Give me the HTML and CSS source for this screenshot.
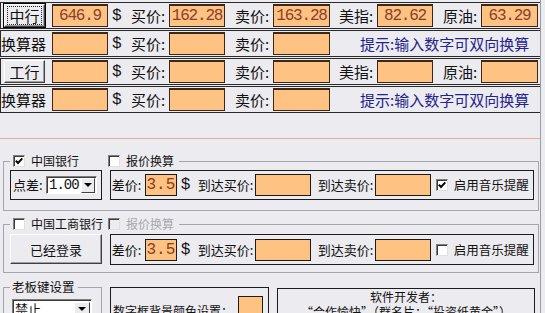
FILE: index.html
```html
<!DOCTYPE html>
<html lang="zh-CN">
<head>
  <meta charset="UTF-8">
  <title>纸黄金报价</title>
  <link rel="stylesheet" href="styles.css">
</head>
<body>
<div class="app">

  <div class="quotes">
    <div class="row row-bank">
      <button class="btn btn-bank btn-default"><span class="focus">中行</span></button>
      <input class="num" value="646.9">
      <span class="cur">$</span>
      <span class="lbl lbl-buy">买价:</span>
      <input class="num" value="162.28">
      <span class="lbl lbl-sell">卖价:</span>
      <input class="num w57" value="163.28">
      <span class="lbl lbl-usd">美指:</span>
      <input class="num" value="82.62">
      <span class="lbl lbl-oil">原油:</span>
      <input class="num w57" value="63.29">
    </div>
    <div class="row">
      <span class="conv">换算器</span>
      <input class="num">
      <span class="cur">$</span>
      <span class="lbl lbl-buy">买价:</span>
      <input class="num">
      <span class="lbl lbl-sell">卖价:</span>
      <input class="num w57">
      <span class="hint">提示:输入数字可双向换算</span>
    </div>
    <div class="row row-bank">
      <button class="btn btn-bank"><span class="focus none">工行</span></button>
      <input class="num">
      <span class="cur">$</span>
      <span class="lbl lbl-buy">买价:</span>
      <input class="num">
      <span class="lbl lbl-sell">卖价:</span>
      <input class="num w57">
      <span class="lbl lbl-usd">美指:</span>
      <input class="num">
      <span class="lbl lbl-oil">原油:</span>
      <input class="num w57">
    </div>
    <div class="row">
      <span class="conv">换算器</span>
      <input class="num">
      <span class="cur">$</span>
      <span class="lbl lbl-buy">买价:</span>
      <input class="num">
      <span class="lbl lbl-sell">卖价:</span>
      <input class="num w57">
      <span class="hint">提示:输入数字可双向换算</span>
    </div>
  </div>

  <div class="divider"></div>

  <!-- 中国银行 -->
  <fieldset class="group group-boc">
    <legend>
      <label class="opt opt-bank"><span class="check"><svg viewBox="0 0 10 10"><path d="M1.8 4.6 4 7 8.3 2.4"/></svg></span>中国银行</label>
      <label class="opt"><span class="check"></span>报价换算</label>
    </legend>
    <div class="group-body">
      <div class="box box-spread">
        <span class="lbl-s lbl-point">点差:</span>
        <div class="combo combo-spread"><span class="val">1.00</span><span class="drop"></span></div>
      </div>
      <div class="box box-alert">
        <span class="lbl-s lbl-diff">差价:</span>
        <input class="num-s w32" value="3.5">
        <span class="cur cur-s">$</span>
        <span class="lbl-s lbl-reach">到达买价:</span>
        <input class="num-s">
        <span class="lbl-s lbl-reach2">到达卖价:</span>
        <input class="num-s">
        <label class="opt opt-music"><span class="check"><svg viewBox="0 0 10 10"><path d="M1.8 4.6 4 7 8.3 2.4"/></svg></span>启用音乐提醒</label>
      </div>
    </div>
  </fieldset>

  <!-- 中国工商银行 -->
  <fieldset class="group group-icbc">
    <legend>
      <label class="opt opt-bank"><span class="check"></span>中国工商银行</label>
      <label class="opt disabled"><span class="check"></span>报价换算</label>
    </legend>
    <div class="group-body">
      <button class="btn btn-login">已经登录</button>
      <div class="box box-alert">
        <span class="lbl-s lbl-diff">差价:</span>
        <input class="num-s w32" value="3.5">
        <span class="cur cur-s">$</span>
        <span class="lbl-s lbl-reach">到达买价:</span>
        <input class="num-s">
        <span class="lbl-s lbl-reach2">到达卖价:</span>
        <input class="num-s">
        <label class="opt opt-music"><span class="check"></span>启用音乐提醒</label>
      </div>
    </div>
  </fieldset>

  <div class="bottom">
    <fieldset class="group group-boss">
      <legend>老板键设置</legend>
      <div class="combo combo-boss"><span class="val">禁止</span><span class="drop"></span></div>
    </fieldset>
    <div class="box box-color">
      <span>数字框背景颜色设置：</span>
      <span class="swatch"></span>
    </div>
    <div class="box box-dev">
      <div>软件开发者：</div>
      <div>“合作愉快”（群名片：“投资纸黄金”）</div>
    </div>
  </div>

</div>
</body>
</html>
```

FILE: styles.css
```css
* {
  box-sizing: border-box;
}

body {
  margin: 0;
  width: 545px;
  height: 313px;
  overflow: hidden;
  background: #ecebef;
  font-family: "Noto Sans CJK SC", "Noto Sans", sans-serif;
  color: #111;
}

.app {
  width: 541px;
  height: 313px;
  padding-top: 2px;
  border-right: 1px solid #9d9ca2;
}

/* top quote rows */

.row {
  display: flex;
  align-items: center;
  height: 27px;
  margin-bottom: 1px;
  border-top: 1px solid #2a2a2a;
  border-bottom: 1px solid #2a2a2a;
  border-left: 1px solid #2a2a2a;
  font-size: 15px;
  line-height: 18px;
  white-space: nowrap;
}

.row-bank {
  padding-left: 3px;
}

.btn {
  font-family: "Noto Sans CJK SC", sans-serif;
  background: #ecebef;
  color: #111;
  border: 1px solid;
  border-color: #fff #404040 #404040 #fff;
  box-shadow: inset -1px -1px 0 #a0a0a0;
  padding: 0;
  cursor: pointer;
}

.btn-bank {
  width: 41px;
  height: 23px;
  font-size: 15px;
  line-height: 17px;
}

.btn-default {
  outline: 1px solid #000;
  outline-offset: 0;
}

.focus {
  display: inline-block;
  padding: 0 1px;
  border: 1px dotted #222;
}

.focus.none {
  border-color: transparent;
}

.num {
  width: 56px;
  height: 23px;
  margin: 0;
  padding: 0;
  border: 1px solid #3a281c;
  border-top-width: 2px;
  background: #fec283;
  font-family: "Liberation Mono", monospace;
  font-size: 16px;
  letter-spacing: -1.2px;
  color: #8a3f2c;
  text-align: center;
}

.row-bank .num:first-of-type {
  margin-left: 7px;
}

.num.w57 {
  width: 57px;
}

.cur {
  width: 23px;
  padding-left: 4px;
  font-family: "Liberation Mono", monospace;
  font-size: 16px;
}

.lbl {
  flex: none;
}

.lbl-buy {
  width: 38px;
}

.lbl-sell {
  width: 48px;
  padding-left: 10px;
}

.lbl-usd {
  width: 47px;
  padding-left: 9px;
}

.lbl-oil {
  width: 48px;
  padding-left: 10px;
}

.conv {
  width: 51px;
}

.hint {
  padding-left: 30px;
  color: #23238c;
}

.divider {
  margin-top: 25px;
  border-top: 1px solid #e4ab9c;
}

/* group boxes */

.group {
  margin: 0 0 0 3px;
  min-width: 0;
  border: 1px solid #a6a5ab;
  font-size: 13px;
  line-height: 16px;
}

.group legend {
  display: flex;
  align-items: center;
  height: 16px;
  padding: 0 5px 0 3px;
  font-size: 12px;
  line-height: 16px;
  white-space: nowrap;
}

.group-boc {
  width: 536px;
  margin-top: 14px;
  padding: 1px 4px 10px 6px;
}

.group-icbc {
  width: 536px;
  margin-top: 5px;
  padding: 2px 4px 7px 6px;
}

.group-body {
  display: flex;
  gap: 8px;
}

.opt {
  display: flex;
  align-items: center;
  white-space: nowrap;
}

.opt-bank {
  width: 95px;
}

.opt.disabled {
  color: #a9a8ad;
}

.check {
  width: 12px;
  height: 12px;
  margin-right: 6px;
  background: #fff;
  border: 1px solid;
  border-color: #7e7e7e #e0e0e0 #e0e0e0 #7e7e7e;
  box-shadow: inset 1px 1px 0 #3c3c3c;
}

.opt.disabled .check {
  background: #ecebef;
}

.check svg {
  display: block;
  width: 10px;
  height: 10px;
}

.check path {
  fill: none;
  stroke: #000;
  stroke-width: 1.9;
}

.box {
  display: flex;
  align-items: center;
  border: 1px solid #1c1c1c;
  white-space: nowrap;
}

.box-spread {
  width: 92px;
  height: 30px;
  padding-left: 2px;
}

.box-alert {
  width: 425px;
  height: 30px;
  padding-left: 1px;
}

.group-icbc .box-alert {
  height: 31px;
}

.lbl-s {
  flex: none;
}

.lbl-point {
  width: 33px;
}

.lbl-diff {
  width: 33px;
}

.lbl-reach {
  width: 57px;
}

.lbl-reach2 {
  width: 64px;
  padding-left: 7px;
}

.num-s {
  width: 56px;
  height: 22px;
  margin: 0;
  padding: 0;
  border: 1px solid #1c1c1c;
  background: #fec283;
  font-family: "Liberation Mono", monospace;
  font-size: 16px;
  color: #8b3a22;
  text-align: center;
}

.num-s.w32 {
  width: 32px;
}

.cur-s {
  width: 21px;
}

.opt-music {
  margin-left: 5px;
  font-size: 12.5px;
}

.combo {
  display: flex;
  align-items: center;
  height: 18px;
  padding: 0 1px 0 2px;
  background: #fff;
  border: 1px solid;
  border-color: #7e7e7e #fff #fff #7e7e7e;
  box-shadow: inset 1px 1px 0 #3c3c3c;
}

.combo .val {
  flex: 1;
  overflow: hidden;
}

.combo-spread {
  width: 51px;
}

.combo-spread .val {
  font-family: "Liberation Mono", monospace;
  font-size: 14px;
  letter-spacing: -1px;
}

.combo-spread .drop {
  width: 14px;
}

.drop {
  display: flex;
  align-items: center;
  justify-content: center;
  flex: none;
  width: 16px;
  height: 15px;
  background: #ecebef;
  border: 1px solid;
  border-color: #fff #404040 #404040 #fff;
}

.drop::after {
  content: "";
  border-left: 4px solid transparent;
  border-right: 4px solid transparent;
  border-top: 4px solid #000;
}

.btn-login {
  width: 92px;
  height: 30px;
  font-size: 13px;
}

/* bottom row */

.bottom {
  display: flex;
  align-items: flex-start;
  margin-top: 6px;
}

.group-boss {
  width: 99px;
  height: 40px;
  padding: 4px 4px 10px 6px;
}

.group-boss legend {
  padding: 0 3px 0 2px;
  font-size: 12.5px;
}

.combo-boss {
  width: 80px;
  height: 20px;
  margin-left: 2px;
  font-size: 13px;
}

.box-color {
  width: 159px;
  height: 40px;
  margin: 8px 0 0 8px;
  padding: 8px 5px 0 2px;
  align-items: flex-start;
  font-size: 12px;
}

.box-color span:first-child {
  margin-top: 6px;
}

.swatch {
  width: 25px;
  height: 24px;
  margin-left: auto;
  background: #fec283;
  border: 1px solid #1c1c1c;
}

.box-dev {
  display: block;
  width: 258px;
  height: 40px;
  margin: 9px 0 0 8px;
  padding-top: 0;
  text-align: center;
  font-size: 12px;
  line-height: 15px;
}
```
